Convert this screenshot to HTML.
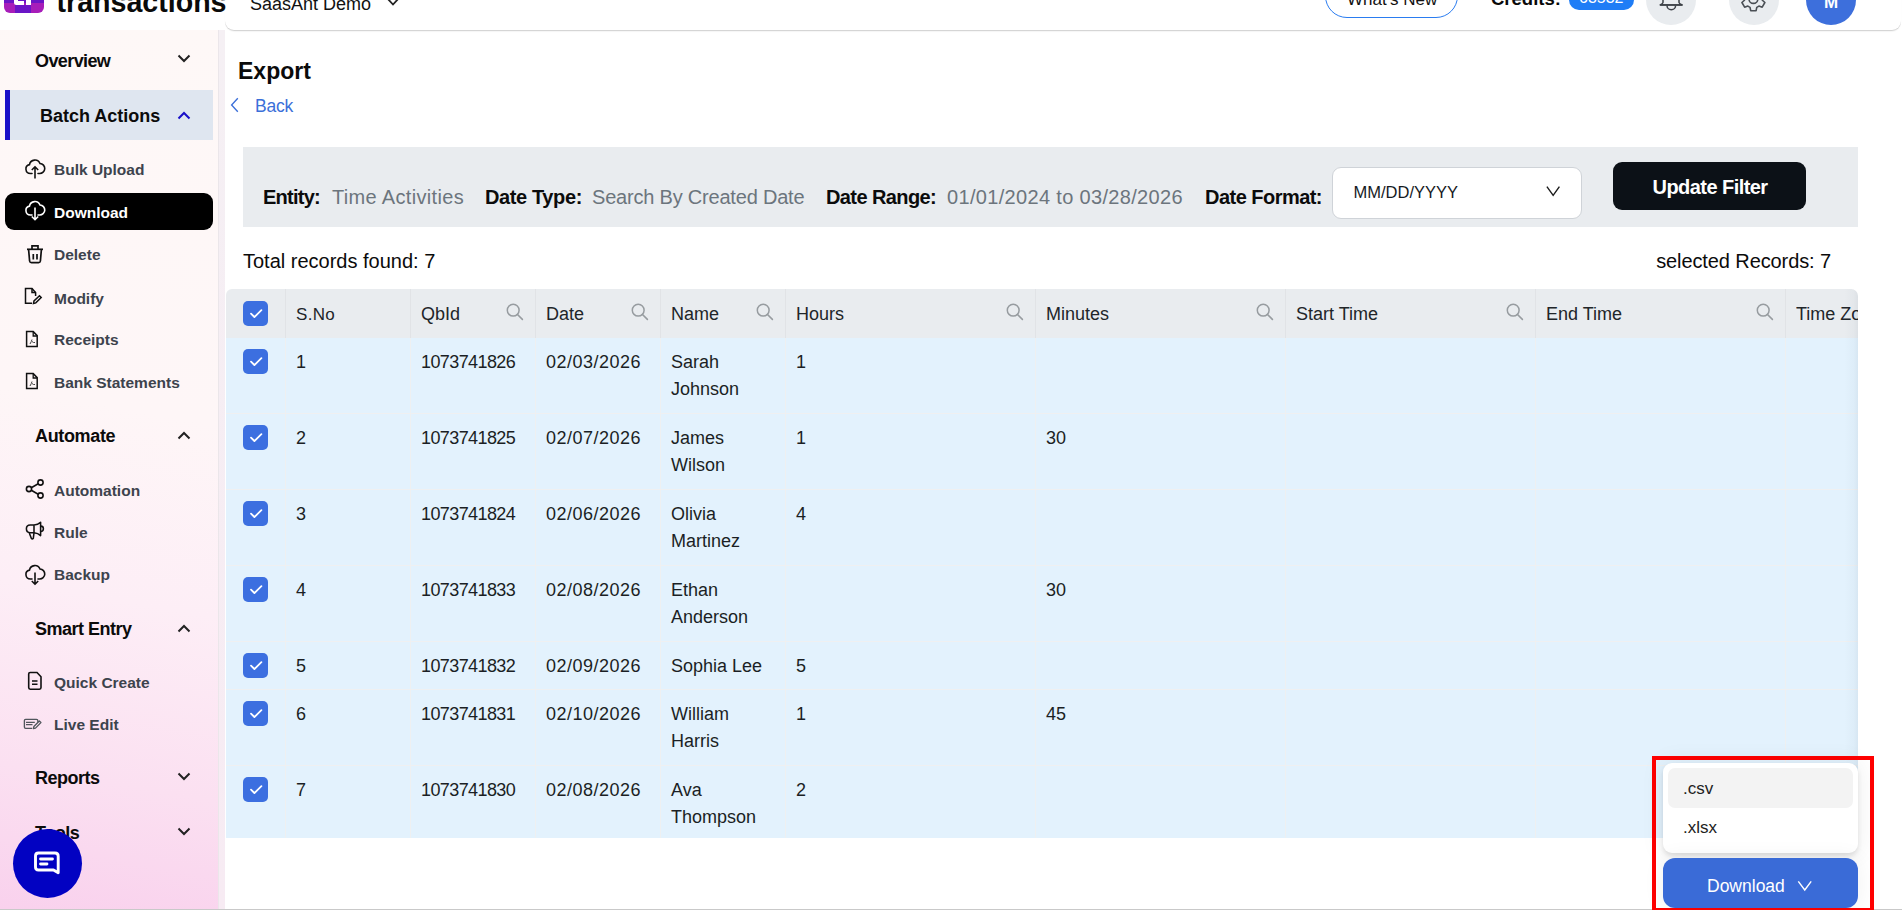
<!DOCTYPE html>
<html><head><meta charset="utf-8"><title>Export</title>
<style>
html,body{margin:0;padding:0;}
body{width:1902px;height:910px;position:relative;overflow:hidden;background:#fff;font-family:"Liberation Sans", sans-serif;}
.t{position:absolute;line-height:1;white-space:nowrap;}
svg{display:block;}
</style></head><body>
<div style="position:absolute;left:0px;top:30px;width:218px;height:880px;background:linear-gradient(190deg,#fef8f7 0%,#fef6f7 43%,#fdeef6 64%,#fbe0f1 84%,#f9d1ed 100%);"></div>
<div style="position:absolute;left:218px;top:30px;width:1px;height:880px;background:#ebe6ea;"></div>
<div style="position:absolute;left:219px;top:30px;width:6px;height:880px;background:linear-gradient(180deg,#f5f0f4 0%,#f7ebf3 100%);"></div>
<div style="position:absolute;left:225px;top:-40px;width:1676px;height:70px;background:#fff;border-radius:0 0 9px 9px;box-shadow:0 1px 0 rgba(0,0,0,0.13), 0 1.5px 1px rgba(0,0,0,0.04);"></div>
<div style="position:absolute;left:4px;top:-27px;width:39.5px;height:40px;border-radius:6px;overflow:hidden;background:#a71db9">
<div style="position:absolute;left:11.3px;top:32.3px;width:15.7px;height:8px;background:#6a15c6"></div>
<div style="position:absolute;left:0;top:0;width:39.5px;height:29.8px;background:#6a15c6"></div>
<div style="position:absolute;left:9.8px;top:0;width:9.8px;height:32px;background:#fff;border-radius:0 0 0 2.5px"></div>
<div style="position:absolute;left:13.8px;top:0;width:5.8px;height:27.6px;background:#6a15c6"></div>
<div style="position:absolute;left:21.8px;top:0;width:4.8px;height:32px;background:#fff"></div>
</div>
<div class="t" style="left:56.5px;top:-11.61px;font-size:28.6px;font-weight:700;color:#0a0a0a;letter-spacing:0px;">transactions</div>
<div class="t" style="left:250px;top:-5.24px;font-size:18px;font-weight:400;color:#111;letter-spacing:0px;">SaasAnt Demo</div>
<svg style="position:absolute;left:385px;top:-4px;" width="16" height="12" viewBox="0 0 16 12" fill="none"><path d="M2 2 L8 8.5 L14 2" stroke="#222" stroke-width="1.8" fill="none"/></svg>
<div style="position:absolute;left:1325px;top:-30px;width:131px;height:46px;border:1px solid #2a7cf0;border-radius:22px;background:#fff;"></div>
<div class="t" style="left:1347px;top:-8.99px;font-size:17px;font-weight:400;color:#111;letter-spacing:0px;">What's New</div>
<div class="t" style="left:1491px;top:-9.96px;font-size:18.5px;font-weight:700;color:#0a0a0a;letter-spacing:0px;">Credits:</div>
<div style="position:absolute;left:1569px;top:-20px;width:65px;height:30px;border-radius:10px;background:#1f7df6;"></div>
<div class="t" style="left:1579px;top:-9.94px;font-size:16px;font-weight:400;color:#fff;letter-spacing:0px;">63532</div>
<div style="position:absolute;left:1646px;top:-25px;width:50px;height:50px;border-radius:50%;background:#e9ecef;"></div>
<div style="position:absolute;left:1729px;top:-25px;width:50px;height:50px;border-radius:50%;background:#e9ecef;"></div>
<div style="position:absolute;left:1806px;top:-25px;width:50px;height:50px;border-radius:50%;background:#3d6fdc;"></div>
<svg style="position:absolute;left:1656px;top:-6px;" width="30" height="20" viewBox="0 0 30 20" fill="none"><path d="M7 -1 V2.5 Q7 3.6 4.2 4.9 H26.2 Q23 3.6 23 2.5 V-1" stroke="#3d4147" stroke-width="1.5" fill="none" stroke-linejoin="round" transform="translate(0,6)"/><path d="M4.2 10.9 H26.2" stroke="#3d4147" stroke-width="1.5"/><path d="M11 11.4 A4.3 4.3 0 0 0 19.6 11.4" stroke="#3d4147" stroke-width="1.5" fill="none"/></svg>
<svg style="position:absolute;left:1740px;top:-14px;" width="27" height="27" viewBox="0 0 27 27" fill="none"><path d="M16.77 21.34 L16.10 24.69 L10.70 24.69 L10.03 21.34 L7.86 20.09 L4.62 21.18 L1.92 16.51 L4.49 14.25 L4.49 11.75 L1.92 9.49 L4.62 4.82 L7.86 5.91 L10.03 4.66 L10.70 1.31 L16.10 1.31 L16.77 4.66 L18.94 5.91 L22.18 4.82 L24.88 9.49 L22.31 11.75 L22.31 14.25 L24.88 16.51 L22.18 21.18 L18.94 20.09 Z" stroke="#4a4f55" stroke-width="1.6" fill="none" stroke-linejoin="round"/><circle cx="13.4" cy="13" r="4.4" stroke="#4a4f55" stroke-width="1.6"/></svg>
<div class="t" style="left:1824px;top:-6.39px;font-size:17px;font-weight:700;color:#fff;letter-spacing:0px;">M</div>
<div class="t" style="left:35px;top:51.76px;font-size:18px;font-weight:700;color:#0b0b0b;letter-spacing:-0.6px;">Overview</div>
<svg style="position:absolute;left:177px;top:54.2px;" width="14" height="9" viewBox="0 0 14 9" fill="none"><path d="M1.5 1.5 L7 7 L12.5 1.5" stroke="#222" stroke-width="2" fill="none"/></svg>
<div style="position:absolute;left:5px;top:90px;width:208px;height:50px;background:#dfe6f0;"></div>
<div style="position:absolute;left:5px;top:90px;width:5px;height:50px;background:#1a10c8;"></div>
<div class="t" style="left:40px;top:106.76px;font-size:18px;font-weight:700;color:#0b0b0b;letter-spacing:0px;">Batch Actions</div>
<svg style="position:absolute;left:177px;top:110.5px;" width="14" height="9" viewBox="0 0 14 9" fill="none"><path d="M1.5 7.5 L7 2 L12.5 7.5" stroke="#1a10c8" stroke-width="2" fill="none"/></svg>
<div style="position:absolute;left:5px;top:193px;width:208px;height:37px;background:#000;border-radius:9px;"></div>
<div class="t" style="left:54px;top:162.18px;font-size:15.5px;font-weight:700;color:#3d434d;letter-spacing:0px;">Bulk Upload</div>
<div class="t" style="left:54px;top:204.88px;font-size:15.5px;font-weight:700;color:#fff;letter-spacing:0px;">Download</div>
<div class="t" style="left:54px;top:247.18px;font-size:15.5px;font-weight:700;color:#3d434d;letter-spacing:0px;">Delete</div>
<div class="t" style="left:54px;top:290.68px;font-size:15.5px;font-weight:700;color:#3d434d;letter-spacing:0px;">Modify</div>
<div class="t" style="left:54px;top:332.18px;font-size:15.5px;font-weight:700;color:#3d434d;letter-spacing:0px;">Receipts</div>
<div class="t" style="left:54px;top:375.18px;font-size:15.5px;font-weight:700;color:#3d434d;letter-spacing:0px;">Bank Statements</div>
<div class="t" style="left:35px;top:426.76px;font-size:18px;font-weight:700;color:#0b0b0b;letter-spacing:-0.35px;">Automate</div>
<svg style="position:absolute;left:177px;top:431px;" width="14" height="9" viewBox="0 0 14 9" fill="none"><path d="M1.5 7.5 L7 2 L12.5 7.5" stroke="#222" stroke-width="2" fill="none"/></svg>
<div class="t" style="left:54px;top:482.68px;font-size:15.5px;font-weight:700;color:#3d434d;letter-spacing:0px;">Automation</div>
<div class="t" style="left:54px;top:525.18px;font-size:15.5px;font-weight:700;color:#3d434d;letter-spacing:0px;">Rule</div>
<div class="t" style="left:54px;top:567.18px;font-size:15.5px;font-weight:700;color:#3d434d;letter-spacing:0px;">Backup</div>
<div class="t" style="left:35px;top:619.76px;font-size:18px;font-weight:700;color:#0b0b0b;letter-spacing:-0.5px;">Smart Entry</div>
<svg style="position:absolute;left:177px;top:624px;" width="14" height="9" viewBox="0 0 14 9" fill="none"><path d="M1.5 7.5 L7 2 L12.5 7.5" stroke="#222" stroke-width="2" fill="none"/></svg>
<div class="t" style="left:54px;top:675.18px;font-size:15.5px;font-weight:700;color:#3d434d;letter-spacing:0px;">Quick Create</div>
<div class="t" style="left:54px;top:717.18px;font-size:15.5px;font-weight:700;color:#3d434d;letter-spacing:0px;">Live Edit</div>
<div class="t" style="left:35px;top:768.76px;font-size:18px;font-weight:700;color:#0b0b0b;letter-spacing:-0.5px;">Reports</div>
<svg style="position:absolute;left:177px;top:772px;" width="14" height="9" viewBox="0 0 14 9" fill="none"><path d="M1.5 1.5 L7 7 L12.5 1.5" stroke="#222" stroke-width="2" fill="none"/></svg>
<div class="t" style="left:35px;top:824.26px;font-size:18px;font-weight:700;color:#0b0b0b;letter-spacing:-0.5px;">Tools</div>
<svg style="position:absolute;left:177px;top:827px;" width="14" height="9" viewBox="0 0 14 9" fill="none"><path d="M1.5 1.5 L7 7 L12.5 1.5" stroke="#222" stroke-width="2" fill="none"/></svg>
<svg style="position:absolute;left:24px;top:157px;" width="22" height="24" viewBox="0 0 22 24" fill="none"><path d="M8 16.5 H6.5 A4.5 4.5 0 0 1 5.5 7.6 A5.5 5.5 0 0 1 16 6.5 A4.5 4.5 0 0 1 15.5 16.5 H14" stroke="#111" stroke-width="1.6" fill="none" stroke-linecap="round"/><path d="M11 21.5 V10 M7.8 13 L11 9.8 L14.2 13" stroke="#111" stroke-width="1.6" fill="none"/></svg>
<svg style="position:absolute;left:24px;top:199px;" width="22" height="24" viewBox="0 0 22 24" fill="none"><path d="M8 16 H6.5 A4.5 4.5 0 0 1 5.5 7.1 A5.5 5.5 0 0 1 16 6 A4.5 4.5 0 0 1 15.5 16 H14" stroke="#fff" stroke-width="1.6" fill="none" stroke-linecap="round"/><path d="M11 8.5 V20.5 M7.8 17.5 L11 20.7 L14.2 17.5" stroke="#fff" stroke-width="1.6" fill="none"/></svg>
<svg style="position:absolute;left:24px;top:243px;" width="22" height="22" viewBox="0 0 22 22" fill="none"><path d="M3 6.3 H19" stroke="#111" stroke-width="1.7"/><path d="M8 6 V2.8 H14 V6" stroke="#111" stroke-width="1.7" fill="none"/><path d="M4.6 6.5 L5.6 18 Q5.8 19.6 7.4 19.6 H14.6 Q16.2 19.6 16.4 18 L17.4 6.5" stroke="#111" stroke-width="1.7" fill="none"/><path d="M9.3 11 V16.5 M13 11 V16.5" stroke="#111" stroke-width="1.7"/></svg>
<svg style="position:absolute;left:22px;top:286px;" width="22" height="20" viewBox="0 0 22 20" fill="none"><path d="M10 17.3 H3.5 V2.6 H10 L13.6 6.6 V10" stroke="#111" stroke-width="1.5" fill="none"/><path d="M10 2.6 V6.6 H13.6" stroke="#111" stroke-width="1.5" fill="none"/><path d="M11.5 17.5 L12 15 L17.5 9.8 L19.2 11.5 L13.8 16.9 Z" stroke="#111" stroke-width="1.5" fill="none"/></svg>
<svg style="position:absolute;left:24px;top:329px;" width="16" height="20" viewBox="0 0 16 20" fill="none"><path d="M2.6 2.6 H9.2 L13.2 6.6 V17.6 H2.6 Z" stroke="#111" stroke-width="1.5" fill="none"/><path d="M9.2 2.8 V7 H13" stroke="#111" stroke-width="1.3" fill="none"/><path d="M6 15 Q7.5 12.5 8 10.5 M8 12.5 Q9.5 14 11 13.5" stroke="#444" stroke-width="1" fill="none"/></svg>
<svg style="position:absolute;left:24px;top:371px;" width="16" height="20" viewBox="0 0 16 20" fill="none"><path d="M2.6 2.6 H9.2 L13.2 6.6 V17.6 H2.6 Z" stroke="#111" stroke-width="1.5" fill="none"/><path d="M9.2 2.8 V7 H13" stroke="#111" stroke-width="1.3" fill="none"/><path d="M6 15 Q7.5 12.5 8 10.5 M8 12.5 Q9.5 14 11 13.5" stroke="#444" stroke-width="1" fill="none"/></svg>
<svg style="position:absolute;left:24px;top:477px;" width="22" height="24" viewBox="0 0 22 24" fill="none"><circle cx="5" cy="12" r="2.6" stroke="#111" stroke-width="1.6"/><circle cx="16.5" cy="5.5" r="2.6" stroke="#111" stroke-width="1.6"/><circle cx="16.5" cy="18.5" r="2.6" stroke="#111" stroke-width="1.6"/><path d="M7.3 10.7 L14.2 6.8 M7.3 13.3 L14.2 17.2" stroke="#111" stroke-width="1.6"/></svg>
<svg style="position:absolute;left:22px;top:518px;" width="26" height="26" viewBox="0 0 26 26" fill="none"><path d="M12 7 H8.2 Q4.4 7 4.4 10.85 Q4.4 14.7 8.2 14.7 H12 M12 7 V14.7 M12 7 Q16 7 18.6 4.3 V17.6 Q16 15 12 14.7" stroke="#111" stroke-width="1.55" fill="none" stroke-linejoin="round"/><path d="M18.7 8.1 A2.7 2.7 0 0 1 18.7 13.5" stroke="#111" stroke-width="1.55" fill="none"/><path d="M7.3 15 L9.3 20.3 Q10.3 21.6 11.3 20.3 L12 14.8" stroke="#111" stroke-width="1.55" fill="none" stroke-linejoin="round"/></svg>
<svg style="position:absolute;left:24px;top:563px;" width="22" height="24" viewBox="0 0 22 24" fill="none"><path d="M8 16 H6.5 A4.5 4.5 0 0 1 5.5 7.1 A5.5 5.5 0 0 1 16 6 A4.5 4.5 0 0 1 15.5 16 H14" stroke="#111" stroke-width="1.6" fill="none" stroke-linecap="round"/><path d="M11 9.5 V21 M7.8 18 L11 21.2 L14.2 18" stroke="#111" stroke-width="1.6" fill="none"/></svg>
<svg style="position:absolute;left:24px;top:670px;" width="22" height="22" viewBox="0 0 22 22" fill="none"><path d="M6.2 2.5 H13 L17 6.8 V17.6 Q17 19.2 15.5 19.2 H6.2 Q4.7 19.2 4.7 17.6 V4 Q4.7 2.5 6.2 2.5 Z" stroke="#111" stroke-width="1.6" fill="none"/><path d="M8 11 H13.5 M8 14.2 H13.5" stroke="#111" stroke-width="1.6"/></svg>
<svg style="position:absolute;left:22px;top:710px;" width="26" height="26" viewBox="0 0 26 26" fill="none"><path d="M10.2 18.3 H3.6 Q2.4 18.3 2.4 17 V10.6 Q2.4 9.4 3.6 9.4 H14.4 Q15.9 9.4 15.9 11 V12" stroke="#50565c" stroke-width="1.35" fill="none"/><path d="M4 12.3 H12.8 M4 14.6 H10.5" stroke="#50565c" stroke-width="1.35"/><path d="M11.4 18.6 L11.9 16.4 L17.3 11 L18.9 12.6 L13.5 18.1 Z" stroke="#50565c" stroke-width="1.35" fill="none" stroke-linejoin="round"/></svg>
<div style="position:absolute;left:12.8px;top:829px;width:69px;height:69px;border-radius:50%;background:#0202c2;"></div>
<svg style="position:absolute;left:33px;top:850px;" width="28" height="26" viewBox="0 0 28 26" fill="none"><path d="M5.5 3 H22 Q25.2 3 25.2 6.2 V22.8 L20.5 20 H5.5 Q2.5 20 2.5 17 V6 Q2.5 3 5.5 3 Z" stroke="#fff" stroke-width="2.9" fill="none" stroke-linejoin="round"/><path d="M7.5 9 H19.5 M7.5 14 H14" stroke="#fff" stroke-width="2.8" stroke-linecap="round"/></svg>
<div class="t" style="left:238px;top:59.53px;font-size:23px;font-weight:700;color:#0b0b0b;letter-spacing:0px;">Export</div>
<svg style="position:absolute;left:228px;top:96px;" width="14" height="18" viewBox="0 0 14 18" fill="none"><path d="M9.8 2.3 L3.6 9 L9.8 15.7" stroke="#3b6fd9" stroke-width="1.35" fill="none"/></svg>
<div class="t" style="left:255px;top:97.99px;font-size:17.5px;font-weight:400;color:#3b6fd9;letter-spacing:-0.2px;">Back</div>
<div style="position:absolute;left:243px;top:147px;width:1615px;height:80px;background:#e9ecef;"></div>
<div class="t" style="left:263px;top:187.47px;font-size:20px;font-weight:700;color:#0b0b0b;letter-spacing:-0.75px;">Entity:</div>
<div class="t" style="left:332px;top:187.47px;font-size:20px;font-weight:400;color:#6c757d;letter-spacing:0.33px;">Time Activities</div>
<div class="t" style="left:485px;top:187.47px;font-size:20px;font-weight:700;color:#0b0b0b;letter-spacing:-0.38px;">Date Type:</div>
<div class="t" style="left:592px;top:187.47px;font-size:20px;font-weight:400;color:#6c757d;letter-spacing:-0.2px;">Search By Created Date</div>
<div class="t" style="left:826px;top:187.47px;font-size:20px;font-weight:700;color:#0b0b0b;letter-spacing:-0.6px;">Date Range:</div>
<div class="t" style="left:947px;top:187.47px;font-size:20px;font-weight:400;color:#6c757d;letter-spacing:0.33px;">01/01/2024 to 03/28/2026</div>
<div class="t" style="left:1205px;top:187.47px;font-size:20px;font-weight:700;color:#0b0b0b;letter-spacing:-0.53px;">Date Format:</div>
<div style="position:absolute;left:1332px;top:167px;width:250px;height:51.5px;background:#fff;border:1px solid #cfd3d8;border-radius:9px;box-sizing:border-box;"></div>
<div class="t" style="left:1353.5px;top:183.63px;font-size:16.5px;font-weight:400;color:#161a1e;letter-spacing:0px;">MM/DD/YYYY</div>
<svg style="position:absolute;left:1543px;top:182px;" width="20" height="18" viewBox="0 0 20 18" fill="none"><path d="M3.9 4.6 L10.15 13.4 L16.4 4.6" stroke="#1a1a1a" stroke-width="1.4" fill="none"/></svg>
<div style="position:absolute;left:1613px;top:162px;width:193px;height:48px;background:#0c1117;border-radius:9px;"></div>
<div class="t" style="left:1652.5px;top:177.07px;font-size:20px;font-weight:700;color:#fff;letter-spacing:-0.55px;">Update Filter</div>
<div class="t" style="left:243px;top:251.27px;font-size:20px;font-weight:400;color:#0b0b0b;letter-spacing:0px;">Total records found: 7</div>
<div class="t" style="right:71px;top:251.27px;font-size:20px;font-weight:400;color:#0b0b0b;letter-spacing:-0.1px;">selected Records: 7</div>
<div style="position:absolute;left:226px;top:289px;width:1632px;height:548.5px;overflow:hidden;border-radius:6px 7px 0 0;">
<div style="position:absolute;left:0;top:0;width:100%;height:49px;background:#e9ecef;"></div>
<div style="position:absolute;left:0;top:49px;width:100%;height:500px;background:#e3f2fd;"></div>
<div style="position:absolute;left:59px;top:0;width:1px;height:49px;background:#e1e3e6;"></div>
<div style="position:absolute;left:59px;top:49px;width:1px;height:500px;background:#eef0f1;"></div>
<div style="position:absolute;left:184px;top:0;width:1px;height:49px;background:#e1e3e6;"></div>
<div style="position:absolute;left:184px;top:49px;width:1px;height:500px;background:#eef0f1;"></div>
<div style="position:absolute;left:309px;top:0;width:1px;height:49px;background:#e1e3e6;"></div>
<div style="position:absolute;left:309px;top:49px;width:1px;height:500px;background:#eef0f1;"></div>
<div style="position:absolute;left:434px;top:0;width:1px;height:49px;background:#e1e3e6;"></div>
<div style="position:absolute;left:434px;top:49px;width:1px;height:500px;background:#eef0f1;"></div>
<div style="position:absolute;left:559px;top:0;width:1px;height:49px;background:#e1e3e6;"></div>
<div style="position:absolute;left:559px;top:49px;width:1px;height:500px;background:#eef0f1;"></div>
<div style="position:absolute;left:809px;top:0;width:1px;height:49px;background:#e1e3e6;"></div>
<div style="position:absolute;left:809px;top:49px;width:1px;height:500px;background:#eef0f1;"></div>
<div style="position:absolute;left:1059px;top:0;width:1px;height:49px;background:#e1e3e6;"></div>
<div style="position:absolute;left:1059px;top:49px;width:1px;height:500px;background:#eef0f1;"></div>
<div style="position:absolute;left:1309px;top:0;width:1px;height:49px;background:#e1e3e6;"></div>
<div style="position:absolute;left:1309px;top:49px;width:1px;height:500px;background:#eef0f1;"></div>
<div style="position:absolute;left:1559px;top:0;width:1px;height:49px;background:#e1e3e6;"></div>
<div style="position:absolute;left:1559px;top:49px;width:1px;height:500px;background:#eef0f1;"></div>
<div style="position:absolute;left:0;top:124px;width:100%;height:1px;background:#eff0f1;"></div>
<div style="position:absolute;left:0;top:200px;width:100%;height:1px;background:#eff0f1;"></div>
<div style="position:absolute;left:0;top:276px;width:100%;height:1px;background:#eff0f1;"></div>
<div style="position:absolute;left:0;top:352px;width:100%;height:1px;background:#eff0f1;"></div>
<div style="position:absolute;left:0;top:400px;width:100%;height:1px;background:#eff0f1;"></div>
<div style="position:absolute;left:0;top:476px;width:100%;height:1px;background:#eff0f1;"></div>
<div style="position:absolute;right:0;top:0;width:14px;height:100%;background:linear-gradient(90deg,rgba(0,30,60,0) 0%,rgba(0,30,60,0.025) 70%,rgba(0,30,60,0.055) 100%);"></div>
</div>
<div style="position:absolute;left:243px;top:301px;width:25px;height:25px;border-radius:5px;background:#3c6fe0;"></div>
<svg style="position:absolute;left:243px;top:301px;" width="25" height="25" viewBox="0 0 25 25" fill="none"><path d="M8 12.6 L11.4 16 L18.4 9.2" stroke="#fff" stroke-width="1.8" fill="none" stroke-linecap="round" stroke-linejoin="round"/></svg>
<div class="t" style="left:296px;top:305.81px;font-size:17px;font-weight:400;color:#212529;letter-spacing:0.3px;">S.No</div>
<div class="t" style="left:421px;top:304.96px;font-size:18px;font-weight:400;color:#212529;letter-spacing:0px;">QbId</div>
<div class="t" style="left:546px;top:304.96px;font-size:18px;font-weight:400;color:#212529;letter-spacing:0px;">Date</div>
<div class="t" style="left:671px;top:304.96px;font-size:18px;font-weight:400;color:#212529;letter-spacing:0px;">Name</div>
<div class="t" style="left:796px;top:304.96px;font-size:18px;font-weight:400;color:#212529;letter-spacing:0px;">Hours</div>
<div class="t" style="left:1046px;top:304.96px;font-size:18px;font-weight:400;color:#212529;letter-spacing:0px;">Minutes</div>
<div class="t" style="left:1296px;top:304.96px;font-size:18px;font-weight:400;color:#212529;letter-spacing:0px;">Start Time</div>
<div class="t" style="left:1546px;top:304.96px;font-size:18px;font-weight:400;color:#212529;letter-spacing:0px;">End Time</div>
<div class="t" style="left:1796px;top:304.96px;font-size:18px;font-weight:400;color:#212529;letter-spacing:0px;width:62px;overflow:hidden;white-space:nowrap;">Time Zone</div>
<svg style="position:absolute;left:505.1px;top:301.9px;" width="20" height="20" viewBox="0 0 20 20" fill="none"><circle cx="8.2" cy="8.2" r="5.9" stroke="#979ca0" stroke-width="1.5"/><path d="M12.5 12.5 L17.4 17.4" stroke="#979ca0" stroke-width="1.6" stroke-linecap="round"/></svg>
<svg style="position:absolute;left:630.1px;top:301.9px;" width="20" height="20" viewBox="0 0 20 20" fill="none"><circle cx="8.2" cy="8.2" r="5.9" stroke="#979ca0" stroke-width="1.5"/><path d="M12.5 12.5 L17.4 17.4" stroke="#979ca0" stroke-width="1.6" stroke-linecap="round"/></svg>
<svg style="position:absolute;left:755.1px;top:301.9px;" width="20" height="20" viewBox="0 0 20 20" fill="none"><circle cx="8.2" cy="8.2" r="5.9" stroke="#979ca0" stroke-width="1.5"/><path d="M12.5 12.5 L17.4 17.4" stroke="#979ca0" stroke-width="1.6" stroke-linecap="round"/></svg>
<svg style="position:absolute;left:1005.1px;top:301.9px;" width="20" height="20" viewBox="0 0 20 20" fill="none"><circle cx="8.2" cy="8.2" r="5.9" stroke="#979ca0" stroke-width="1.5"/><path d="M12.5 12.5 L17.4 17.4" stroke="#979ca0" stroke-width="1.6" stroke-linecap="round"/></svg>
<svg style="position:absolute;left:1255.1px;top:301.9px;" width="20" height="20" viewBox="0 0 20 20" fill="none"><circle cx="8.2" cy="8.2" r="5.9" stroke="#979ca0" stroke-width="1.5"/><path d="M12.5 12.5 L17.4 17.4" stroke="#979ca0" stroke-width="1.6" stroke-linecap="round"/></svg>
<svg style="position:absolute;left:1505.1px;top:301.9px;" width="20" height="20" viewBox="0 0 20 20" fill="none"><circle cx="8.2" cy="8.2" r="5.9" stroke="#979ca0" stroke-width="1.5"/><path d="M12.5 12.5 L17.4 17.4" stroke="#979ca0" stroke-width="1.6" stroke-linecap="round"/></svg>
<svg style="position:absolute;left:1755.1px;top:301.9px;" width="20" height="20" viewBox="0 0 20 20" fill="none"><circle cx="8.2" cy="8.2" r="5.9" stroke="#979ca0" stroke-width="1.5"/><path d="M12.5 12.5 L17.4 17.4" stroke="#979ca0" stroke-width="1.6" stroke-linecap="round"/></svg>
<div style="position:absolute;left:243px;top:349px;width:25px;height:25px;border-radius:5px;background:#3c6fe0;"></div>
<svg style="position:absolute;left:243px;top:349px;" width="25" height="25" viewBox="0 0 25 25" fill="none"><path d="M8 12.6 L11.4 16 L18.4 9.2" stroke="#fff" stroke-width="1.8" fill="none" stroke-linecap="round" stroke-linejoin="round"/></svg>
<div class="t" style="left:296px;top:352.76px;font-size:18px;font-weight:400;color:#1b1f24;letter-spacing:0px;">1</div>
<div class="t" style="left:421px;top:352.76px;font-size:18px;font-weight:400;color:#1b1f24;letter-spacing:-0.6px;">1073741826</div>
<div class="t" style="left:546px;top:352.76px;font-size:18px;font-weight:400;color:#1b1f24;letter-spacing:0.5px;">02/03/2026</div>
<div class="t" style="left:671px;top:352.76px;font-size:18px;font-weight:400;color:#1b1f24;letter-spacing:0px;">Sarah</div>
<div class="t" style="left:671px;top:379.76px;font-size:18px;font-weight:400;color:#1b1f24;letter-spacing:0px;">Johnson</div>
<div class="t" style="left:796px;top:352.76px;font-size:18px;font-weight:400;color:#1b1f24;letter-spacing:0px;">1</div>
<div style="position:absolute;left:243px;top:425px;width:25px;height:25px;border-radius:5px;background:#3c6fe0;"></div>
<svg style="position:absolute;left:243px;top:425px;" width="25" height="25" viewBox="0 0 25 25" fill="none"><path d="M8 12.6 L11.4 16 L18.4 9.2" stroke="#fff" stroke-width="1.8" fill="none" stroke-linecap="round" stroke-linejoin="round"/></svg>
<div class="t" style="left:296px;top:428.76px;font-size:18px;font-weight:400;color:#1b1f24;letter-spacing:0px;">2</div>
<div class="t" style="left:421px;top:428.76px;font-size:18px;font-weight:400;color:#1b1f24;letter-spacing:-0.6px;">1073741825</div>
<div class="t" style="left:546px;top:428.76px;font-size:18px;font-weight:400;color:#1b1f24;letter-spacing:0.5px;">02/07/2026</div>
<div class="t" style="left:671px;top:428.76px;font-size:18px;font-weight:400;color:#1b1f24;letter-spacing:0px;">James</div>
<div class="t" style="left:671px;top:455.76px;font-size:18px;font-weight:400;color:#1b1f24;letter-spacing:0px;">Wilson</div>
<div class="t" style="left:796px;top:428.76px;font-size:18px;font-weight:400;color:#1b1f24;letter-spacing:0px;">1</div>
<div class="t" style="left:1046px;top:428.76px;font-size:18px;font-weight:400;color:#1b1f24;letter-spacing:0px;">30</div>
<div style="position:absolute;left:243px;top:501px;width:25px;height:25px;border-radius:5px;background:#3c6fe0;"></div>
<svg style="position:absolute;left:243px;top:501px;" width="25" height="25" viewBox="0 0 25 25" fill="none"><path d="M8 12.6 L11.4 16 L18.4 9.2" stroke="#fff" stroke-width="1.8" fill="none" stroke-linecap="round" stroke-linejoin="round"/></svg>
<div class="t" style="left:296px;top:504.76px;font-size:18px;font-weight:400;color:#1b1f24;letter-spacing:0px;">3</div>
<div class="t" style="left:421px;top:504.76px;font-size:18px;font-weight:400;color:#1b1f24;letter-spacing:-0.6px;">1073741824</div>
<div class="t" style="left:546px;top:504.76px;font-size:18px;font-weight:400;color:#1b1f24;letter-spacing:0.5px;">02/06/2026</div>
<div class="t" style="left:671px;top:504.76px;font-size:18px;font-weight:400;color:#1b1f24;letter-spacing:0px;">Olivia</div>
<div class="t" style="left:671px;top:531.76px;font-size:18px;font-weight:400;color:#1b1f24;letter-spacing:0px;">Martinez</div>
<div class="t" style="left:796px;top:504.76px;font-size:18px;font-weight:400;color:#1b1f24;letter-spacing:0px;">4</div>
<div style="position:absolute;left:243px;top:577px;width:25px;height:25px;border-radius:5px;background:#3c6fe0;"></div>
<svg style="position:absolute;left:243px;top:577px;" width="25" height="25" viewBox="0 0 25 25" fill="none"><path d="M8 12.6 L11.4 16 L18.4 9.2" stroke="#fff" stroke-width="1.8" fill="none" stroke-linecap="round" stroke-linejoin="round"/></svg>
<div class="t" style="left:296px;top:580.76px;font-size:18px;font-weight:400;color:#1b1f24;letter-spacing:0px;">4</div>
<div class="t" style="left:421px;top:580.76px;font-size:18px;font-weight:400;color:#1b1f24;letter-spacing:-0.6px;">1073741833</div>
<div class="t" style="left:546px;top:580.76px;font-size:18px;font-weight:400;color:#1b1f24;letter-spacing:0.5px;">02/08/2026</div>
<div class="t" style="left:671px;top:580.76px;font-size:18px;font-weight:400;color:#1b1f24;letter-spacing:0px;">Ethan</div>
<div class="t" style="left:671px;top:607.76px;font-size:18px;font-weight:400;color:#1b1f24;letter-spacing:0px;">Anderson</div>
<div class="t" style="left:1046px;top:580.76px;font-size:18px;font-weight:400;color:#1b1f24;letter-spacing:0px;">30</div>
<div style="position:absolute;left:243px;top:653px;width:25px;height:25px;border-radius:5px;background:#3c6fe0;"></div>
<svg style="position:absolute;left:243px;top:653px;" width="25" height="25" viewBox="0 0 25 25" fill="none"><path d="M8 12.6 L11.4 16 L18.4 9.2" stroke="#fff" stroke-width="1.8" fill="none" stroke-linecap="round" stroke-linejoin="round"/></svg>
<div class="t" style="left:296px;top:656.76px;font-size:18px;font-weight:400;color:#1b1f24;letter-spacing:0px;">5</div>
<div class="t" style="left:421px;top:656.76px;font-size:18px;font-weight:400;color:#1b1f24;letter-spacing:-0.6px;">1073741832</div>
<div class="t" style="left:546px;top:656.76px;font-size:18px;font-weight:400;color:#1b1f24;letter-spacing:0.5px;">02/09/2026</div>
<div class="t" style="left:671px;top:656.76px;font-size:18px;font-weight:400;color:#1b1f24;letter-spacing:0px;">Sophia Lee</div>
<div class="t" style="left:796px;top:656.76px;font-size:18px;font-weight:400;color:#1b1f24;letter-spacing:0px;">5</div>
<div style="position:absolute;left:243px;top:701px;width:25px;height:25px;border-radius:5px;background:#3c6fe0;"></div>
<svg style="position:absolute;left:243px;top:701px;" width="25" height="25" viewBox="0 0 25 25" fill="none"><path d="M8 12.6 L11.4 16 L18.4 9.2" stroke="#fff" stroke-width="1.8" fill="none" stroke-linecap="round" stroke-linejoin="round"/></svg>
<div class="t" style="left:296px;top:704.76px;font-size:18px;font-weight:400;color:#1b1f24;letter-spacing:0px;">6</div>
<div class="t" style="left:421px;top:704.76px;font-size:18px;font-weight:400;color:#1b1f24;letter-spacing:-0.6px;">1073741831</div>
<div class="t" style="left:546px;top:704.76px;font-size:18px;font-weight:400;color:#1b1f24;letter-spacing:0.5px;">02/10/2026</div>
<div class="t" style="left:671px;top:704.76px;font-size:18px;font-weight:400;color:#1b1f24;letter-spacing:0px;">William</div>
<div class="t" style="left:671px;top:731.76px;font-size:18px;font-weight:400;color:#1b1f24;letter-spacing:0px;">Harris</div>
<div class="t" style="left:796px;top:704.76px;font-size:18px;font-weight:400;color:#1b1f24;letter-spacing:0px;">1</div>
<div class="t" style="left:1046px;top:704.76px;font-size:18px;font-weight:400;color:#1b1f24;letter-spacing:0px;">45</div>
<div style="position:absolute;left:243px;top:777px;width:25px;height:25px;border-radius:5px;background:#3c6fe0;"></div>
<svg style="position:absolute;left:243px;top:777px;" width="25" height="25" viewBox="0 0 25 25" fill="none"><path d="M8 12.6 L11.4 16 L18.4 9.2" stroke="#fff" stroke-width="1.8" fill="none" stroke-linecap="round" stroke-linejoin="round"/></svg>
<div class="t" style="left:296px;top:780.76px;font-size:18px;font-weight:400;color:#1b1f24;letter-spacing:0px;">7</div>
<div class="t" style="left:421px;top:780.76px;font-size:18px;font-weight:400;color:#1b1f24;letter-spacing:-0.6px;">1073741830</div>
<div class="t" style="left:546px;top:780.76px;font-size:18px;font-weight:400;color:#1b1f24;letter-spacing:0.5px;">02/08/2026</div>
<div class="t" style="left:671px;top:780.76px;font-size:18px;font-weight:400;color:#1b1f24;letter-spacing:0px;">Ava</div>
<div class="t" style="left:671px;top:807.76px;font-size:18px;font-weight:400;color:#1b1f24;letter-spacing:0px;">Thompson</div>
<div class="t" style="left:796px;top:780.76px;font-size:18px;font-weight:400;color:#1b1f24;letter-spacing:0px;">2</div>
<div style="position:absolute;left:0px;top:909px;width:1902px;height:1px;background:#c9c9c9;"></div>
<div style="position:absolute;left:1652px;top:756px;width:222px;height:156px;border:4px solid #ff0000;box-sizing:border-box;"></div>
<div style="position:absolute;left:1663px;top:763px;width:195px;height:90px;background:#fff;border-radius:9px;box-shadow:0 3px 5px rgba(0,0,0,0.11), 0 0 22px 3px rgba(0,0,0,0.06);"></div>
<div style="position:absolute;left:1668px;top:768px;width:185px;height:40px;background:#f3f3f3;border-radius:7px;"></div>
<div class="t" style="left:1683px;top:779.61px;font-size:17px;font-weight:400;color:#222;letter-spacing:0px;">.csv</div>
<div class="t" style="left:1683px;top:819.11px;font-size:17px;font-weight:400;color:#222;letter-spacing:0px;">.xlsx</div>
<div style="position:absolute;left:1663px;top:858px;width:195px;height:50px;background:#3a6bd7;border-radius:12px;box-shadow:0 0 20px 2px rgba(0,0,0,0.05);"></div>
<div class="t" style="left:1707px;top:877.79px;font-size:17.5px;font-weight:400;color:#fff;letter-spacing:0px;">Download</div>
<svg style="position:absolute;left:1795px;top:877px;" width="20" height="18" viewBox="0 0 20 18" fill="none"><path d="M3.3 4.3 L9.75 13 L16.2 4.3" stroke="#fff" stroke-width="1.4" fill="none"/></svg>
</body></html>
